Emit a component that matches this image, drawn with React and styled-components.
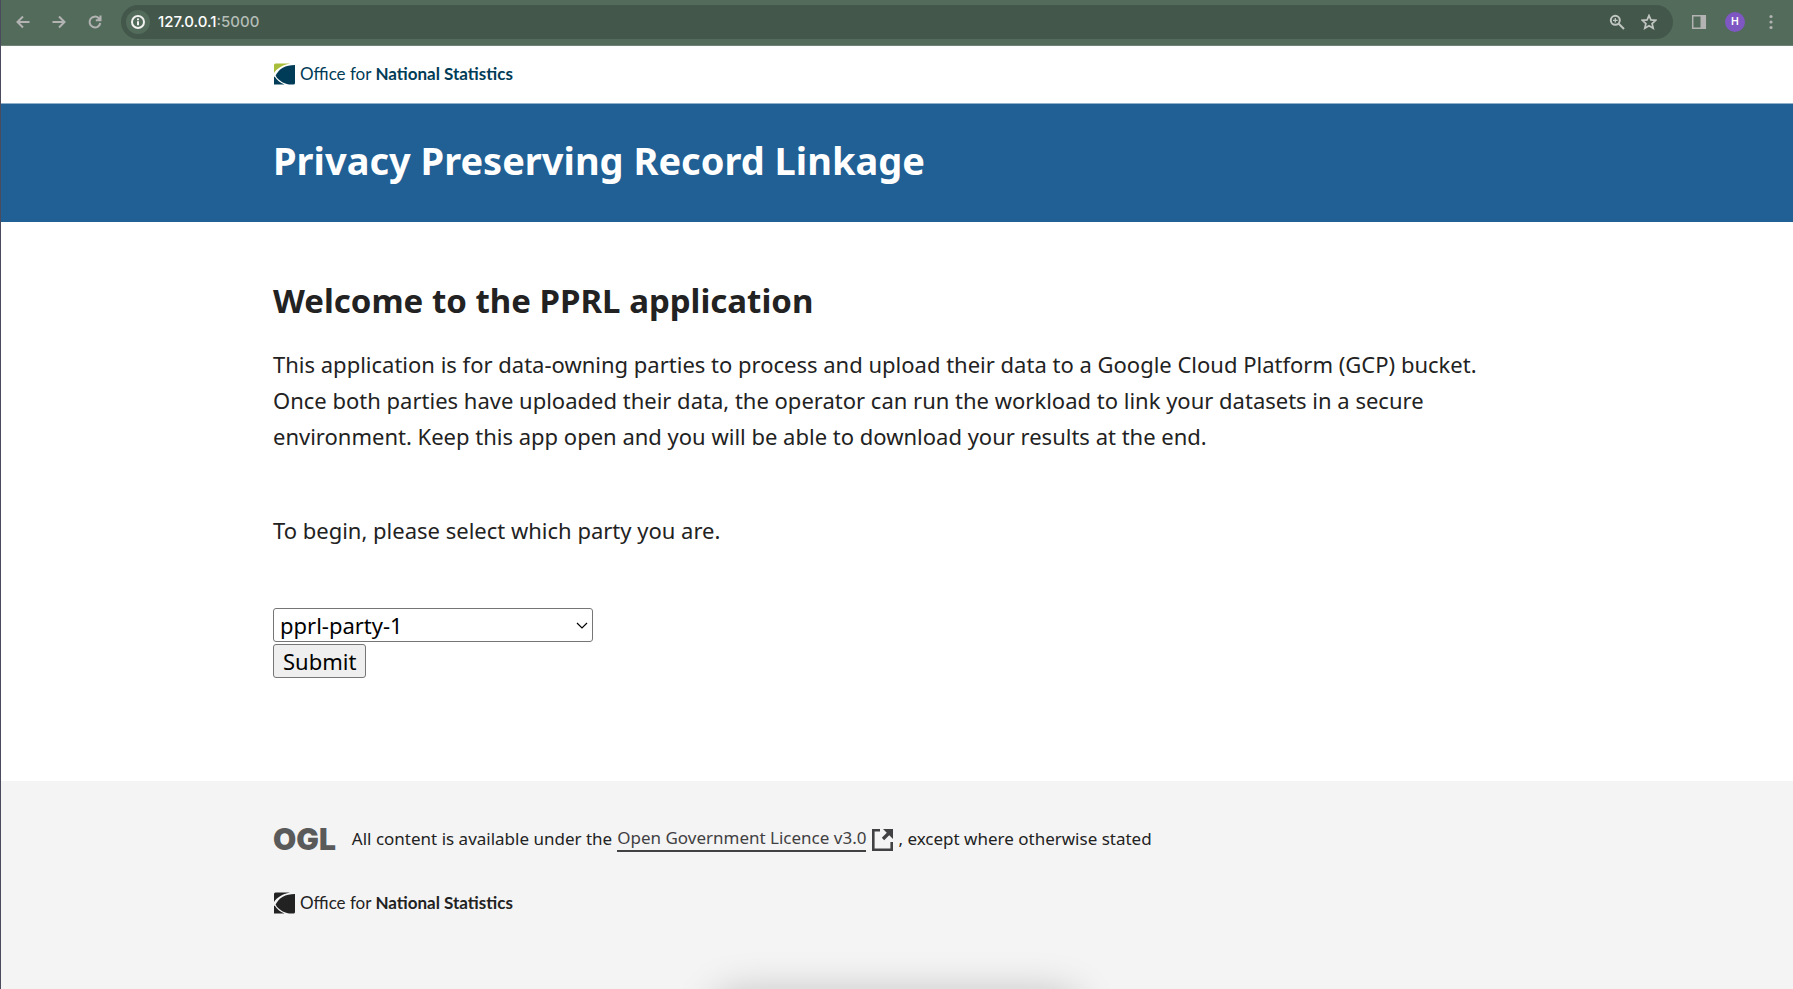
import React from "react";
import styled, { createGlobalStyle } from "styled-components";

const GlobalStyle = createGlobalStyle`
  *, *::before, *::after { box-sizing: border-box; }
  body {
    margin: 0;
    background: #fff;
    color: #222;
    font-family: "Noto Sans", "Open Sans", sans-serif;
    font-size: 22px;
    line-height: 36px;
  }
`;

const Window = styled.div`
  display: flex;
  flex-direction: column;
  min-height: 100vh;
  border-left: 1px solid #4a4c5e;
`;

const Toolbar = styled.nav`
  display: flex;
  align-items: center;
  height: 46px;
  padding: 0 4px 2px 11px;
  background: #526b5a;
  border-bottom: 1px solid #6f8476;
`;

const ToolButton = styled.button`
  display: flex;
  align-items: center;
  justify-content: center;
  width: ${(p) => p.$width || 36}px;
  height: 32px;
  padding: 0;
  border: 0;
  background: none;
  color: ${(p) => p.$color || "#b3b3b3"};
`;

const AddressBar = styled.div`
  display: flex;
  flex: 1;
  align-items: center;
  height: 34px;
  margin: 0 8px 0 15px;
  padding: 0 8px 0 5px;
  border-radius: 17px;
  background: #43574a;
`;

const SiteInfo = styled.button`
  display: flex;
  align-items: center;
  justify-content: center;
  width: 24px;
  height: 24px;
  padding: 0;
  border: 0;
  border-radius: 50%;
  background: #526b5a;
  color: #f2f2f2;
`;

const Address = styled.span`
  flex: 1;
  margin-left: 8px;
  color: #b4bdb7;
  font: 500 15px/20px Inter, Roboto, sans-serif;
`;

const Host = styled.span`
  color: #fff;
`;

const Avatar = styled.span`
  display: flex;
  align-items: center;
  justify-content: center;
  width: 20px;
  height: 20px;
  border-radius: 50%;
  background: #7e57c2;
  color: #fff;
  font: 500 11px/20px Roboto, sans-serif;
`;

const Container = styled.div`
  width: 100%;
  max-width: 1280px;
  margin: 0 auto;
  padding: 0 16px;
`;

const Header = styled.header`
  padding: 16px 0 17px;
`;

const Hero = styled.div`
  padding: 32px 0 38px;
  background: #206095;
  border-top: 1px solid #8fb0ca;
`;

const Title = styled.h1`
  margin: 0;
  color: #fff;
  font-size: 38px;
  line-height: 48px;
`;

const Brand = styled.a`
  display: flex;
  align-items: center;
  gap: 5px;
  width: fit-content;
  height: 24px;
  color: ${(p) => p.$color};
  font: 400 17px/24px Lato, "Open Sans", sans-serif;
  text-decoration: none;

  strong { font-weight: 700; }
`;

const Main = styled.main`
  padding: 58px 0 103px;
`;

const Heading = styled.h2`
  margin: 0 0 24px;
  font-size: 33px;
  line-height: 42px;
`;

const Paragraph = styled.p`
  margin: 0 0 ${(p) => p.$gap}px;
`;

const Form = styled.form`
  display: flex;
  flex-direction: column;
  align-items: flex-start;
  gap: 2px;
`;

const Prompt = styled.label`
  margin-bottom: 58px;
`;

const SelectBox = styled.div`
  position: relative;
  width: 320px;

  svg {
    position: absolute;
    top: 14px;
    right: 5px;
    pointer-events: none;
  }
`;

const Select = styled.select`
  display: block;
  appearance: none;
  width: 100%;
  height: 34px;
  padding: 0 24px 0 6px;
  border: 1px solid #767676;
  border-radius: 3px;
  background: #fff;
  color: #000;
  font: inherit;
  line-height: 32px;
`;

const Submit = styled.button`
  height: 34px;
  padding: 0 9px;
  border: 1px solid #767676;
  border-radius: 3px;
  background: #efefef;
  color: #000;
  font: inherit;
  line-height: 32px;
`;

const Footer = styled.footer`
  position: relative;
  flex: 1;
  overflow: hidden;
  padding: 40px 0 68px;
  background: #f4f4f4;

  &::after {
    content: "";
    position: absolute;
    top: 100%;
    left: 50%;
    width: 360px;
    height: 40px;
    margin: 8px 0 0 -180px;
    border-radius: 20px;
    box-shadow: 0 0 40px 4px rgba(0, 0, 0, 0.22);
  }
`;

const Licence = styled.p`
  display: flex;
  align-items: center;
  margin: 0 0 34px;
  font-size: 17px;
  line-height: 36px;
`;

const Ogl = styled.span`
  margin-right: 16px;
  color: #5a5a5a;
  font: 900 30px/36px Inter, Lato, sans-serif;
`;

const LicenceLink = styled.a`
  display: inline-flex;
  align-items: center;
  gap: 6px;
  margin: 0 5px;
  color: #414042;
  text-decoration: none;

  span {
    line-height: 24px;
    border-bottom: 2px solid #414042;
  }
`;

const Stroke = ({ size = 16, width = 2, children }) => (
  <svg width={size} height={size} viewBox="0 0 16 16" fill="none" stroke="currentColor" strokeWidth={width} aria-hidden="true">
    {children}
  </svg>
);

const BrandMark = ({ top, left, body }) => (
  <svg width="22" height="22" viewBox="0 0 22 22" aria-hidden="true">
    <path d="M1 2Q1 0.500 2.500 0.500H17C9 2 4 5.500 1 10Z" fill={top} />
    <path d="M22 2V20Q22 21.500 20.500 21.500H16C10 20.500 5 17 2.600 12.500C6 6 12 2 22 2Z" fill={body} />
    <path d="M1 14L1.600 13.500C4 17 7 20 11.500 21.500H1Z" fill={left} />
  </svg>
);

const BrandLink = ({ color, accent }) => (
  <Brand href="#" $color={color}>
    <BrandMark top={accent} left={color} body={color} />
    <span>Office for <strong>National Statistics</strong></span>
  </Brand>
);

export default function App() {
  return (
    <Window>
      <GlobalStyle />
      <Toolbar aria-label="Browser">
        <ToolButton $width={22} aria-label="Back">
          <Stroke><path d="M14.500 8H3M8 2.500L2.500 8L8 13.500" /></Stroke>
        </ToolButton>
        <ToolButton $width={50} aria-label="Forward">
          <Stroke><path d="M1.500 8H13M8 2.500L13.500 8L8 13.500" /></Stroke>
        </ToolButton>
        <ToolButton $width={22} aria-label="Reload">
          <Stroke><path d="M13.300 9A5.400 5.400 0 1 1 11.800 4.200L13 5.500M13.500 1.500V6.200H8.800" /></Stroke>
        </ToolButton>
        <AddressBar>
          <SiteInfo aria-label="Site information">
            <Stroke><circle cx="8" cy="8" r="6" /><path d="M8 7.200V11.200M8 4.500V6.200" /></Stroke>
          </SiteInfo>
          <Address><Host>127.0.0.1</Host>:5000</Address>
          <ToolButton $width={32} $color="#c2c6c3" aria-label="Zoom">
            <Stroke><circle cx="6.300" cy="6.300" r="4.500" /><path d="M9.500 9.500L15 15" /><path d="M6.300 4V8.600M4 6.300H8.600" strokeWidth="1.300" /></Stroke>
          </ToolButton>
          <ToolButton $width={32} $color="#c2c6c3" aria-label="Bookmark">
            <Stroke width={1.7}><path d="M8 1.500L9.900 5.900L14.700 6.300L11.100 9.500L12.200 14.200L8 11.700L3.800 14.200L4.900 9.500L1.300 6.300L6.100 5.900Z" /></Stroke>
          </ToolButton>
        </AddressBar>
        <ToolButton aria-label="Side panel">
          <Stroke width={1.5}><path d="M1.700 1.700H14.300V14.300H1.700Z" /><path d="M12 1V15" strokeWidth="5" /></Stroke>
        </ToolButton>
        <ToolButton aria-label="Profile"><Avatar>H</Avatar></ToolButton>
        <ToolButton aria-label="Menu">
          <svg width="16" height="16" viewBox="0 0 16 16" fill="currentColor" aria-hidden="true">
            <circle cx="8" cy="2.500" r="1.600" /><circle cx="8" cy="8" r="1.600" /><circle cx="8" cy="13.500" r="1.600" />
          </svg>
        </ToolButton>
      </Toolbar>
      <Header>
        <Container><BrandLink color="#003c57" accent="#a8bd3a" /></Container>
      </Header>
      <Hero>
        <Container><Title>Privacy Preserving Record Linkage</Title></Container>
      </Hero>
      <Main>
        <Container>
          <Heading>Welcome to the PPRL application</Heading>
          <Paragraph $gap={58}>
            This application is for data-owning parties to process and upload their data to a Google Cloud
            Platform (GCP) bucket. Once both parties have uploaded their data, the operator can run the
            workload to link your datasets in a secure environment. Keep this app open and you will be able
            to download your results at the end.
          </Paragraph>
          <Form onSubmit={(e) => e.preventDefault()}>
            <Prompt htmlFor="party">To begin, please select which party you are.</Prompt>
            <SelectBox>
              <Select id="party" defaultValue="pprl-party-1">
                <option>pprl-party-1</option>
                <option>pprl-party-2</option>
              </Select>
              <svg width="12" height="7" viewBox="0 0 12 7" fill="none" stroke="#000" strokeWidth="1.200" aria-hidden="true">
                <path d="M1 1L6 6L11 1" />
              </svg>
            </SelectBox>
            <Submit type="submit">Submit</Submit>
          </Form>
        </Container>
      </Main>
      <Footer>
        <Container>
          <Licence>
            <Ogl>OGL</Ogl>
            All content is available under the
            <LicenceLink href="#">
              <span>Open Government Licence v3.0</span>
              <svg width="21" height="23" viewBox="0 0 21 23" fill="none" stroke="currentColor" strokeWidth="2.600" aria-hidden="true">
                <path d="M8 2.300H1.300V21.700H19.700V14" />
                <path d="M11 11L18 4" strokeWidth="3.400" />
                <path d="M11 1H21V11Z" fill="currentColor" stroke="none" />
              </svg>
            </LicenceLink>
            , except where otherwise stated
          </Licence>
          <BrandLink color="#222" accent="#222" />
        </Container>
      </Footer>
    </Window>
  );
}
